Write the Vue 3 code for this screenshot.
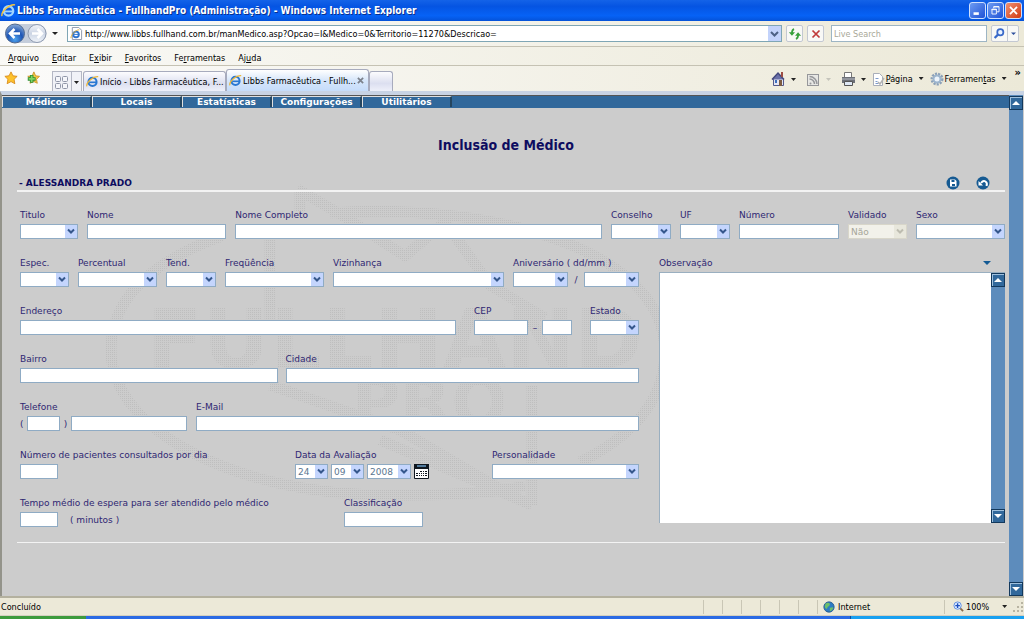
<script setup>
const menus = [
  ['', 'A', 'rquivo'],
  ['', 'E', 'ditar'],
  ['E', 'x', 'ibir'],
  ['', 'F', 'avoritos'],
  ['Fe', 'r', 'ramentas'],
  ['Aj', 'u', 'da'],
]
const nav = ['Médicos', 'Locais', 'Estatísticas', 'Configurações', 'Utilitários']

const sel = (w, value = '', extra = {}) => ({ kind: 'select', w, value, ...extra })
const inp = (w, extra = {}) => ({ kind: 'input', w, ...extra })
const txt = (value) => ({ kind: 'text', value })

const identity = [
  { id: 'titulo', label: 'Titulo', w: 58, parts: [sel(58)] },
  { id: 'nome', label: 'Nome', w: 139, grow: 1, parts: [inp(139, { grow: 1 })] },
  { id: 'completo', label: 'Nome Completo', w: 366, grow: 3, parts: [inp(366, { grow: 1 })] },
  { id: 'conselho', label: 'Conselho', w: 60, parts: [sel(60)] },
  { id: 'uf', label: 'UF', w: 50, parts: [sel(50)] },
  { id: 'numero', label: 'Número', w: 100, parts: [inp(100)] },
  { id: 'validado', label: 'Validado', w: 59, parts: [sel(59, 'Não', { disabled: true })] },
  { id: 'sexo', label: 'Sexo', w: 89, parts: [sel(89)] },
]

const rows = [
  { gap: 9, fields: [
    { id: 'espec', label: 'Espec.', w: 49, parts: [sel(49)] },
    { id: 'perc', label: 'Percentual', w: 79, parts: [sel(79)] },
    { id: 'tend', label: 'Tend.', w: 50, parts: [sel(50)] },
    { id: 'freq', label: 'Freqüência', w: 99, parts: [sel(99)] },
    { id: 'viz', label: 'Vizinhança', w: 168, grow: 1, parts: [sel(168, '', { grow: 1 })] },
    { id: 'aniv', label: 'Aniversário ( dd/mm )', w: 126, parts: [sel(55), txt('/'), sel(55)] },
  ] },
  { gap: 18, fields: [
    { id: 'end', label: 'Endereço', w: 434, grow: 1, parts: [inp(434, { grow: 1 })] },
    { id: 'cep', label: 'CEP', w: 98, parts: [inp(54), txt('–'), inp(30)] },
    { id: 'estado', label: 'Estado', w: 49, parts: [sel(49)] },
  ] },
  { gap: 8, fields: [
    { id: 'bairro', label: 'Bairro', w: 257, grow: 1, parts: [inp(257, { grow: 1 })] },
    { id: 'cidade', label: 'Cidade', w: 353, grow: 1, parts: [inp(353, { grow: 1 })] },
  ] },
  { gap: 9, fields: [
    { id: 'tel', label: 'Telefone', w: 167, parts: [txt('('), inp(33), txt(')'), inp(116)] },
    { id: 'email', label: 'E-Mail', w: 442, grow: 1, parts: [inp(442, { grow: 1 })] },
  ] },
  { gap: 0, fields: [
    { id: 'pac', label: 'Número de pacientes consultados por dia', w: 275, parts: [inp(38)] },
    { id: 'data', label: 'Data da Avaliação', w: 197, parts: [sel(33, '24'), sel(33, '09'), sel(44, '2008'), { kind: 'calendar' }] },
    { id: 'pers', label: 'Personalidade', w: 147, grow: 1, parts: [sel(147, '', { grow: 1 })] },
  ] },
  { gap: 0, fields: [
    { id: 'espera', label: 'Tempo médio de espera para ser atendido pelo médico', w: 324, parts: [inp(38), txt('( minutos )')] },
    { id: 'class', label: 'Classificação', w: 79, parts: [inp(79)] },
  ] },
]

const size = (o) => ({ flex: `${o.grow || 0} ${o.grow ? 1 : 0} ${o.w}px` })
const groups = [{ cls: 'top', rows: [{ gap: 9, fields: identity }] }, { cls: 'left', rows }]
</script>

<template>
  <div class="window">
    <header class="titlebar">
      <svg class="ie" viewBox="0 0 16 16"><circle cx="8" cy="8.500" r="5" fill="none" stroke="#9fd4ff" stroke-width="2.500" /><path d="M4 9h9" stroke="#9fd4ff" stroke-width="2" /><path d="M1 14C0 9 9 1 15 2" fill="none" stroke="#f3c544" stroke-width="1.500" /></svg>
      <h1>Libbs Farmacêutica - FullhandPro (Administração) - Windows Internet Explorer</h1>
      <button class="wb" aria-label="Minimizar"><svg viewBox="0 0 17 17"><path d="M4 12h6" stroke="#fff" stroke-width="3" /></svg></button>
      <button class="wb" aria-label="Restaurar"><svg viewBox="0 0 17 17" fill="none" stroke="#fff"><path d="M6.500 6V4h6v6H10M6.500 4.500h6" /><path d="M4.500 7v5.500h5V7zM4 7.500h6" /></svg></button>
      <button class="wb close" aria-label="Fechar"><svg viewBox="0 0 17 17"><path d="M4.500 4.500l8 8M12.500 4.500l-8 8" stroke="#fff" stroke-width="2" /></svg></button>
    </header>

    <div class="address">
      <svg class="arrows" viewBox="0 0 58 25">
        <defs>
          <radialGradient id="gb" cx=".5" cy=".8" r=".8"><stop offset="0" stop-color="#4fa4ee" /><stop offset=".5" stop-color="#1d55b5" /><stop offset="1" stop-color="#8badd8" /></radialGradient>
          <linearGradient id="gf" x2="0" y2="1"><stop offset="0" stop-color="#f4f6fa" /><stop offset=".5" stop-color="#ccd5e4" /><stop offset="1" stop-color="#f0f4fa" /></linearGradient>
        </defs>
        <path d="M14 3h22a9.500 9.500 0 0 1 0 19H14z" fill="#c4cddb" />
        <circle cx="36" cy="12.500" r="9" fill="url(#gf)" stroke="#8f9bb0" />
        <circle cx="14" cy="12.500" r="9.500" fill="url(#gb)" stroke="#51698f" />
        <path d="M19 12.500H9.500M13.500 8l-4.500 4.500 4.500 4.500" fill="none" stroke="#fff" stroke-width="2.500" />
        <path d="M31 12.500h9.500M36.500 8l4.500 4.500-4.500 4.500" fill="none" stroke="#fff" stroke-width="2.500" />
        <path d="M51 11h6l-3 3z" fill="#222" />
      </svg>
      <div class="urlbox">
        <svg class="page" viewBox="0 0 14 14"><path d="M2.500.5h7l3 3v10h-10z" fill="#fff" stroke="#8a94a8" /><circle cx="6.500" cy="8" r="3" fill="none" stroke="#2c74d0" stroke-width="2" /><path d="M4 8h6" stroke="#2c74d0" /><path d="M1 12C1 8 6 3 10 3" fill="none" stroke="#e6b030" /></svg>
        <input class="url" aria-label="Endereço da página" value="http://www.libbs.fullhand.com.br/manMedico.asp?Opcao=I&amp;Medico=0&amp;Territorio=11270&amp;Descricao=">
        <button class="drop" aria-label="Histórico"><svg viewBox="0 0 9 9"><path d="M1 3l3.500 3.500L8 3" fill="none" stroke="#4d6185" stroke-width="2" /></svg></button>
      </div>
      <button class="sq" aria-label="Atualizar"><svg viewBox="0 0 16 16"><path d="M7 2.500Q4.500 3 4.500 7M9 13.500Q11.500 13 11.500 9" fill="none" stroke="#38a03c" stroke-width="2" /><path d="M1 6h7L4.500 10zM15 10H8l3.500-4z" fill="#38a03c" /></svg></button>
      <button class="sq" aria-label="Parar"><svg viewBox="0 0 16 16"><path d="M4 4l8 8M12 4l-8 8" stroke="#c03a3a" stroke-width="2" /></svg></button>
      <input class="search" aria-label="Pesquisar" placeholder="Live Search">
      <button class="sq find" aria-label="Buscar"><svg viewBox="0 0 16 16"><circle cx="9.500" cy="6" r="3.500" fill="#e9f2ff" stroke="#3969c9" stroke-width="2" /><path d="M6.500 9L3 12.500" stroke="#3969c9" stroke-width="2.500" /></svg><i></i><svg class="tri" viewBox="0 0 9 9"><path d="M2 3.500h5L4.500 6z" fill="#2c4e9c" /></svg></button>
    </div>

    <nav class="menu"><a v-for="m in menus" :key="m[2]" href="#">{{ m[0] }}<u>{{ m[1] }}</u>{{ m[2] }}</a></nav>

    <div class="tabs">
      <svg class="star" viewBox="0 0 16 16"><path d="M8 1l2.200 4.500 4.800.6-3.500 3.400.9 5L8 12.100 3.600 14.500l.9-5L1 6.100l4.800-.6z" fill="#fdc22c" stroke="#d98a19" /></svg>
      <svg class="star" viewBox="0 0 16 16"><path d="M9 1l2 4.500 4.500.6-3.500 3.400.9 4.500-4-2-4.300 2 1-5L2 6.100l5-.6z" fill="#f8c745" stroke="#c9932a" /><path d="M6.500 4.500v9M2 9h9" stroke="#2f8e31" stroke-width="4" /><path d="M6.500 5.500v7M3 9h7" stroke="#7ed564" stroke-width="2" /></svg>
      <button class="quick" aria-label="Guias rápidas"><svg viewBox="0 0 28 20"><g fill="#f5f6fa" stroke="#9096a8"><rect x="2.500" y="4.500" width="5" height="5" rx="1" /><rect x="9.500" y="4.500" width="5" height="5" rx="1" /><rect x="2.500" y="11.500" width="5" height="5" rx="1" /><rect x="9.500" y="11.500" width="5" height="5" rx="1" /></g><path d="M18.500 0v20" stroke="#b4b7c4" /><path d="M21 9h5l-2.500 3z" fill="#222" /></svg></button>
      <button class="tab"><svg class="ie" viewBox="0 0 16 16"><circle cx="8" cy="8.500" r="5" fill="none" stroke="#2a78d2" stroke-width="2.500" /><path d="M4 9h9" stroke="#2a78d2" stroke-width="2" /><path d="M1 14C0 9 9 1 15 2" fill="none" stroke="#ecb73a" stroke-width="1.500" /></svg>Início - Libbs Farmacêutica, F...</button>
      <button class="tab active"><svg class="ie" viewBox="0 0 16 16"><circle cx="8" cy="8.500" r="5" fill="none" stroke="#2a78d2" stroke-width="2.500" /><path d="M4 9h9" stroke="#2a78d2" stroke-width="2" /><path d="M1 14C0 9 9 1 15 2" fill="none" stroke="#ecb73a" stroke-width="1.500" /></svg><span>Libbs Farmacêutica - Fullh...</span><svg class="x" viewBox="0 0 8 8"><path d="M1 1l6 6M7 1L1 7" stroke="#7c828c" stroke-width="2" /></svg></button>
      <button class="tab new" aria-label="Nova guia"></button>
      <div class="tools">
        <svg class="t28" viewBox="0 0 28 16"><path d="M2.500 8v6.500h10V8" fill="#e4e6f5" stroke="#53598c" /><path d="M1 8.500L7 2l6 6.500" fill="#6a70a8" stroke="#43487c" stroke-width="1.500" /><path d="M10 1h2v5h-2z" fill="#9c4b43" /><path d="M8 9h3v6H8z" fill="#7d5c43" /><path d="M4 9h2v3H4z" fill="#3c6fbd" /><path d="M20 7h5l-2.500 3z" fill="#222" /></svg>
        <svg class="t28" viewBox="0 0 28 16"><rect x="1.500" y="3.500" width="11" height="11" fill="#e7e7e4" stroke="#96979a" /><path d="M3.500 8a5 5 0 0 1 5 5M3.500 5.500a7.500 7.500 0 0 1 7.500 7.500" fill="none" stroke="#96979a" stroke-width="1.500" /><circle cx="4.500" cy="12.500" r="1" fill="#96979a" /><path d="M20 7h5l-2.500 3z" fill="#c5c4bb" /></svg>
        <svg class="t28" viewBox="0 0 28 16"><path d="M3.500 1.500h7v5h-7z" fill="#fff" stroke="#777" /><path d="M1 6h13v6H1z" fill="#6d7078" /><path d="M1 8h13" stroke="#b9bcc4" /><path d="M3.500 10.500h8v4h-8z" fill="#dfe8f5" stroke="#555" /><path d="M20 7h5l-2.500 3z" fill="#222" /></svg>
        <svg class="t14" viewBox="0 0 14 16"><path d="M2.500 2.500h6l3 3v9h-9z" fill="#fff" stroke="#a9aeb8" /><path d="M4.500 7.500h3M4.500 10.500h2M4.500 12.500h3" stroke="#7d9acb" /><path d="M7 11l2 2 4-6" fill="none" stroke="#b3b3b3" stroke-width="1.500" /></svg>
        <a href="#"><u>P</u>ágina</a><b class="caret"></b>
        <svg class="t14 gear" viewBox="0 0 14 16"><circle cx="7" cy="8" r="5" fill="none" stroke="#8ba0b8" stroke-width="3" stroke-dasharray="2 1" /><circle cx="7" cy="8" r="3.500" fill="#edf4fb" stroke="#9db5cd" stroke-width="2" /></svg>
        <a href="#">Ferramen<u>t</u>as</a><b class="caret"></b>
        <span class="more">»</span>
      </div>
    </div>

    <main class="body">
      <div class="content">
        <nav class="nav"><a v-for="n in nav" :key="n" href="#">{{ n }}</a></nav>
        <div class="canvas">
          <svg class="mark" viewBox="95 105 914 490" preserveAspectRatio="xMinYMin" aria-hidden="true">
            <defs><pattern id="dots" width="4" height="4" patternUnits="userSpaceOnUse"><path d="M0 0h1v1H0zM2 2h1v1H2zM2 0h1v1H2zM0 2h1v1H0z" fill="#bebebe" /></pattern></defs>
            <g fill="none" stroke="url(#dots)" stroke-width="11">
              <path d="M222 236C150 262 111 300 111 350 111 432 240 495 386 495 450 495 490 494 525 486" />
              <path d="M330 213C480 202 665 245 665 352 665 405 625 440 580 462" />
              <path d="M270 238V325M270 385L400 430 510 495M532 385V505M532 505L380 440" />
              <path d="M297 189L340 214 405 256 445 222 490 285 545 318M300 190V212" />
            </g>
            <g fill="url(#dots)" font-family="DejaVu Sans" font-weight="bold"><text x="147" y="368" font-size="82">FULLHAND</text><text x="352" y="425" font-size="66">PRO</text></g>
          </svg>

          <h2>Inclusão de Médico</h2>
          <div class="who">
            <strong>- ALESSANDRA PRADO</strong>
            <button class="round" aria-label="Salvar"><svg viewBox="0 0 14 14"><circle cx="7" cy="7" r="6.500" fill="#165a92" /><path d="M4 3.500h5l1.500 1.500v5.500H4z" fill="#fff" /><path d="M5.500 4h3v2h-3zM6 8h3v2H6z" fill="#165a92" /></svg></button>
            <button class="round" aria-label="Desfazer"><svg viewBox="0 0 14 14"><circle cx="7" cy="7" r="6.500" fill="#165a92" /><path d="M10.500 10C12 6 8 3 5 7" fill="none" stroke="#fff" stroke-width="2" /><path d="M2.500 5v4.500H7z" fill="#fff" /></svg></button>
          </div>

          <form class="form" @submit.prevent>
            <div v-for="g in groups" :key="g.cls" :class="g.cls">
              <div v-for="(r, i) in g.rows" :key="i" class="row" :style="{ gap: r.gap + 'px' }">
                <div v-for="f in r.fields" :key="f.id" class="field" :style="size(f)">
                  <label :for="f.id + (f.parts[0].kind === 'text' ? 1 : 0)">{{ f.label }}</label>
                  <div class="parts" :class="'p-' + f.id">
                    <template v-for="(p, k) in f.parts" :key="k">
                      <input v-if="p.kind === 'input'" :id="f.id + k" class="ctl" :aria-label="k > 1 ? f.label : undefined" :style="size(p)">
                      <span v-else-if="p.kind === 'select'" class="pick" :class="{ off: p.disabled }" :style="size(p)">
                        <select :id="f.id + k" class="ctl" :disabled="p.disabled" :aria-label="k > 0 ? f.label : undefined"><option>{{ p.value }}</option></select>
                        <svg viewBox="0 0 12 12"><path d="M3 4l3 3 3-3" fill="none" stroke="currentColor" stroke-width="2" /></svg>
                      </span>
                      <button v-else-if="p.kind === 'calendar'" class="cal" aria-label="Calendário"><svg viewBox="0 0 15 15"><path d="M.5.5h14v14H.5z" fill="#fff" stroke="#101820" /><path d="M0 0h15v5H0z" fill="#101820" /><path d="M3 2h9" stroke="#50799b" stroke-width="2" /><path d="M6 7h2v1H6zM9 7h1v1H9zM11 7h2v1h-2zM2 9h2v1H2zM5 9h1v1H5zM7 9h1v1H7zM9 9h1v1H9zM11 9h2v1h-2zM2 11h2v1H2zM5 11h1v1H5zM7 11h1v1H7zM9 11h1v1H9zM11 11h2v1h-2z" fill="#101820" /></svg></button>
                      <span v-else class="lit">{{ p.value }}</span>
                    </template>
                  </div>
                </div>
              </div>
            </div>
            <div class="obs">
              <label for="obs">Observação<svg viewBox="0 0 8 4"><path d="M0 0h8L4 4z" fill="#135a94" /></svg></label>
              <div class="area">
                <textarea id="obs"></textarea>
                <div class="bar"><button aria-label="Subir"><svg viewBox="0 0 8 8"><path d="M0 6h8L4 2z" fill="#fff" /></svg></button><button aria-label="Descer"><svg viewBox="0 0 8 8"><path d="M0 2h8L4 6z" fill="#fff" /></svg></button></div>
              </div>
            </div>
          </form>
        </div>
      </div>
      <div class="bar main"><button aria-label="Rolar para cima"><svg viewBox="0 0 8 8"><path d="M0 6h8L4 2z" fill="#fff" /></svg></button><button aria-label="Rolar para baixo"><svg viewBox="0 0 8 8"><path d="M0 2h8L4 6z" fill="#fff" /></svg></button></div>
    </main>

    <footer class="status">
      <span class="done">Concluído</span>
      <i v-for="n in 6" :key="n" class="cell"></i>
      <span class="zone"><svg viewBox="0 0 14 14"><circle cx="7" cy="7" r="6" fill="#2d7cc4" stroke="#24598c" /><path d="M3 3c3-2 5-1 5 1s-3 2-3 4-2 1-3-1zM8 8c3-1 4-1 4 0s-2 4-4 4z" fill="#6ec06a" /></svg>Internet</span>
      <span class="zoom"><svg viewBox="0 0 12 12"><path d="M7 7l4 4" stroke="#8a6a4a" stroke-width="2" /><circle cx="5" cy="5" r="4" fill="#dcebff" stroke="#5a8ae0" /><path d="M5 2.500v5M2.500 5h5" stroke="#1d4fc0" stroke-width="1.500" /></svg>100%<b class="caret"></b></span>
      <svg class="grip" viewBox="0 0 12 12"><path d="M9 1h2v2H9zM9 5h2v2H9zM9 9h2v2H9zM5 5h2v2H5zM5 9h2v2H5zM1 9h2v2H1z" fill="#b8b4a2" /></svg>
    </footer>
    <div class="taskbar"><i class="start"></i><i class="mid"></i><i class="tray"></i></div>
  </div>
</template>

<style>
body { margin: 0; }
</style>

<style scoped>
* { box-sizing: border-box; }
.window { min-height: 100vh; display: flex; flex-direction: column; overflow: hidden; background: #ece9d8; color: #000; font: 9px/14px "DejaVu Sans Condensed", "DejaVu Sans", Tahoma, sans-serif; }
button { padding: 0; border: 0; background: none; font: inherit; color: inherit; }
input, select, textarea { margin: 0; border-radius: 0; font: inherit; outline: 0; }
a { color: inherit; text-decoration: none; }
svg { display: block; flex: none; }
.ie { width: 15px; height: 15px; }

.titlebar { height: 21px; display: flex; align-items: center; gap: 1px; padding: 0 2px 0 1px; background: linear-gradient(#1463e8, #0554e2 30%, #0662f6 75%, #0452d8); }
h1 { flex: 1; margin: 0; color: #fff; font: bold 10px/20px "DejaVu Sans Condensed", "Trebuchet MS", sans-serif; white-space: nowrap; text-shadow: 1px 1px #0a2f8c; }
.wb { width: 17px; height: 17px; border: 1px solid #cfe0ff; border-radius: 3px; background: linear-gradient(135deg, #6d9bf2, #1f52d6); }
.wb svg { width: 15px; height: 15px; }
.wb.close { background: linear-gradient(135deg, #f09070, #d13a12); }

.address { height: 26px; display: flex; align-items: center; gap: 4px; padding: 0 5px 0 1px; border-bottom: 1px solid #c5c2b3; background: linear-gradient(90deg, #fbfbfa, #ece9d8); }
.arrows { width: 58px; height: 25px; }
.urlbox { flex: 1; height: 17px; display: flex; align-items: center; gap: 2px; margin-left: 4px; padding-left: 2px; border: 1px solid #7fa6b5; background: #fff; min-width: 0; }
.page { width: 13px; height: 13px; }
.url { flex: 1; min-width: 0; padding: 0; border: 0; background: none; }
.drop { width: 13px; height: 15px; background: #c3d3fb; display: flex; align-items: center; justify-content: center; }
.drop svg { width: 9px; height: 9px; }
.sq { width: 17px; height: 17px; display: flex; align-items: center; justify-content: center; border: 1px solid #c3c8d2; border-radius: 2px; background: #f8f8f6; }
.sq svg { width: 14px; height: 14px; }
.search { width: 156px; height: 17px; margin-left: 3px; padding: 0 2px; border: 1px solid #9db5c4; background: #fff; }
.search::placeholder { color: #a9a898; opacity: 1; }
.find { width: 28px; justify-content: space-between; }
.find i { width: 1px; height: 15px; background: #c3c8d2; }
.find .tri { width: 9px; height: 9px; }

.menu { height: 19px; display: flex; align-items: center; gap: 13px; padding: 3px 0 0 8px; border-bottom: 1px solid #c5c2b3; background: linear-gradient(90deg, #f9f9f6, #ece9d8); }

.tabs { height: 25px; display: flex; align-items: flex-end; padding-left: 4px; background: linear-gradient(90deg, #fbfbfa, #ece9d8); white-space: nowrap; }
.star { width: 14px; height: 14px; margin: 0 8px 6px 0; }
.quick { width: 30px; height: 20px; margin-left: 4px; border: 1px solid #b4b7c4; border-bottom: 0; background: #f1f2f7; }
.quick svg { width: 28px; height: 20px; }
.tab { width: 143px; height: 20px; display: flex; align-items: center; gap: 1px; margin-left: 1px; padding-left: 2px; border: 1px solid #a7abbd; border-bottom: 0; border-radius: 3px 3px 0 0; background: linear-gradient(#fcfcfe, #dcdff0 60%, #eef0fa); }
.tab .ie { width: 13px; height: 13px; }
.tab.active { width: 143px; height: 22px; margin: 0; background: linear-gradient(#fff, #d6e6fa 50%, #c5dcfa); }
.tab.active span { flex: 1; text-align: left; }
.tab .x { width: 7px; height: 7px; margin-right: 5px; }
.tab.new { width: 24px; margin: 0; }
.tools { flex: 1; height: 25px; display: flex; align-items: center; justify-content: flex-end; padding-right: 3px; }
.t28 { width: 28px; height: 16px; margin-right: 7px; }
.t14 { width: 14px; height: 16px; margin-right: 1px; }
.t28:nth-child(3) { margin-right: 2px; }
.gear { margin-left: 6px; }
.caret { width: 5px; height: 3px; margin-left: 6px; background: #222; clip-path: polygon(0 0, 100% 0, 50% 100%); }
.more { margin-left: 8px; padding-bottom: 12px; font-size: 11px; font-weight: bold; }

.body { flex: 1; display: flex; border-top: 4px solid #c8d3e4; border-left: 2px solid #93938a; background: #ccc; }
.content { flex: 1; min-width: 0; }
.nav { height: 13px; display: flex; margin-right: -1px; border-top: 1px solid #555; background: #31689b; }
.nav a { width: 90px; height: 11px; border: 1px solid #e0e0e0; border-width: 1px 0 0 1px; border-right: 2px solid #24455f; color: #fff; font: bold 9px/10px "DejaVu Sans", Verdana, sans-serif; text-align: center; }
.canvas { position: relative; padding: 27px 4px 0 15px; color: #2e2672; font: 9px/14px "DejaVu Sans", Verdana, sans-serif; }
.mark { position: absolute; left: 93px; top: -3px; width: 914px; height: 490px; z-index: 0; }
h2 { position: relative; margin: 0; padding-right: 10px; color: #0e0c60; font: bold 14px/20px "DejaVu Sans Condensed", Tahoma, sans-serif; text-align: center; }
.who { position: relative; display: flex; align-items: center; margin-top: 20px; padding: 0 15px 0 2px; height: 15px; border-bottom: 2px solid #f3f3f3; color: #0e0c60; box-sizing: content-box; }
.who strong { flex: 1; }
.round { width: 14px; height: 14px; margin-left: 16px; }
.form { position: relative; display: grid; grid-template-columns: 619fr 346fr; column-gap: 20px; margin-top: 16px; padding: 0 0 15px 3px; border-bottom: 1px solid #f3f3f3; }
.top { grid-column: 1 / 3; }
.left, .top { min-width: 0; }
.row { display: flex; padding-bottom: 17px; }
.left .row:last-child { padding-bottom: 0; }
.field { min-width: 0; }
label { display: block; white-space: nowrap; }
.parts { display: flex; align-items: center; height: 15px; margin-top: 2px; justify-content: space-between; }
.p-pac, .p-espera, .p-data, .p-class { justify-content: flex-start; }
.p-data { gap: 3px; }
.p-espera { gap: 12px; }
.ctl { height: 15px; min-width: 0; padding: 0 2px; border: 1px solid #8fabc4; background: #fff; color: #5a7690; }
.pick { position: relative; display: flex; }
.pick .ctl { width: 100%; appearance: none; line-height: 12px; }
.pick svg { position: absolute; right: 1px; top: 1px; width: 12px; height: 13px; background: #c4d5fd; color: #35578c; pointer-events: none; }
.off .ctl { background: #f2f1ea; border-color: #d8d6ca; color: #a6a599; opacity: 1; }
.off svg { background: #e8e7dc; color: #bdbcb0; }
.cal { width: 15px; height: 15px; }
.obs { display: flex; flex-direction: column; }
.obs label { display: flex; align-items: center; justify-content: space-between; padding-right: 14px; }
.obs label svg { width: 8px; height: 4px; }
.area { flex: 1; display: flex; margin: 2px 0 4px; background: #fff; border: solid #9aafc0; border-width: 1px 0 0 1px; }
textarea { flex: 1; min-width: 0; height: auto; border: 0; background: none; resize: none; }
.bar { width: 14px; display: flex; flex-direction: column; justify-content: space-between; background: #5d8cbc; }
.bar button { width: 14px; height: 14px; display: flex; align-items: center; justify-content: center; border: 1px solid #12385c; box-shadow: inset 1px 1px #9fc0dd; background: #31689b; }
.bar button svg { width: 8px; height: 8px; }
.main { margin-right: 1px; padding-top: 1px; }

.status { height: 20px; display: flex; align-items: center; border-top: 2px solid #b4b19f; border-bottom: 1px solid #d4d0bf; background: #ece9d8; }
.done { flex: 1; padding-left: 1px; }
.cell { width: 19px; height: 14px; border-left: 1px solid #c9c6b5; }
.zone { width: 127px; height: 14px; display: flex; align-items: center; gap: 3px; padding-left: 5px; border-left: 1px solid #c9c6b5; }
.zone svg { width: 12px; height: 12px; }
.zoom { width: 68px; height: 14px; display: flex; align-items: center; gap: 2px; padding-left: 8px; border-left: 1px solid #c9c6b5; }
.zoom svg { width: 11px; height: 11px; }
.zoom .caret { margin-left: 11px; }
.grip { width: 12px; height: 12px; }
.taskbar { height: 3px; display: flex; background: #245edb; }
.start { width: 86px; background: #3c9a3c; }
.mid { flex: 1; background: #2a6ae4; }
.tray { width: 174px; background: #18a0f0; border-left: 1px solid #0b4ba0; }
</style>
